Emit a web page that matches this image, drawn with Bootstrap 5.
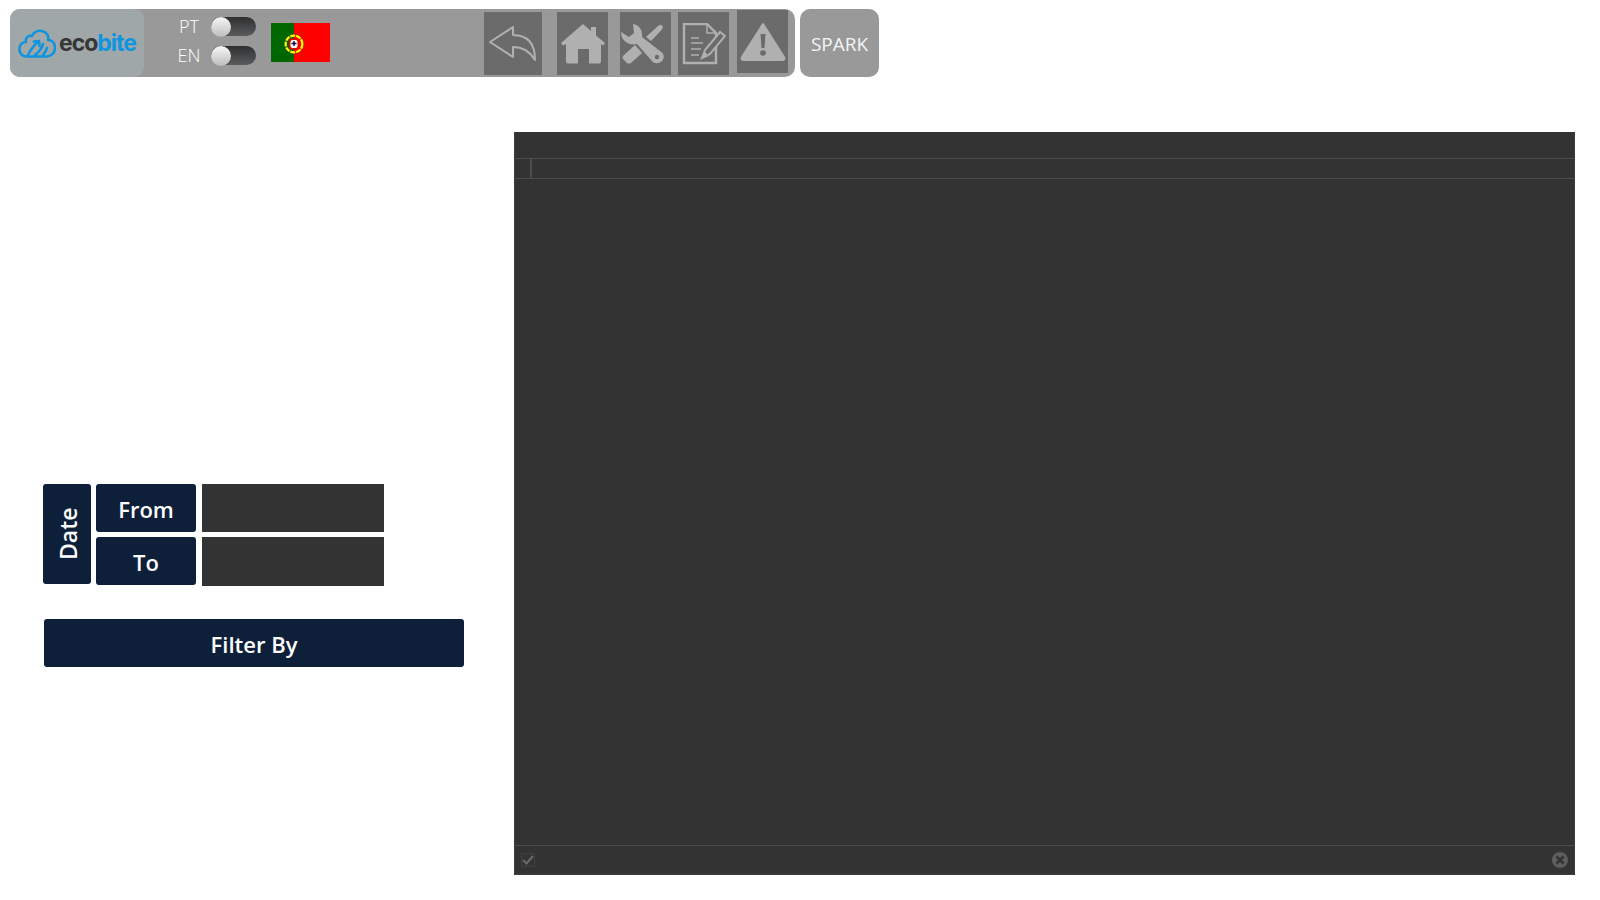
<!DOCTYPE html>
<html lang="en">
<head>
    <meta charset="UTF-8">
    <meta name="viewport" content="width=device-width, initial-scale=1.0">
    <title>Ecobite</title>
    <link href="https://cdn.jsdelivr.net/npm/bootstrap@5.3.0/dist/css/bootstrap.min.css" rel="stylesheet">
    <style>
        body { font-family: "Open Sans", "Noto Sans", sans-serif; background: #fff; overflow: hidden; }
        .top-area { padding: 9px 0 0 10px; height: 132px; }
        .tool-bar { width: 785px; height: 68px; background: #999; border-radius: 10px; }
        .tool-bar > * { flex-shrink: 0; }
        .logo-box { width: 134px; height: 68px; background: #9fa7a9; border-radius: 10px; padding: 1px 0 0 8px; }
        .logo-word { font-family: Inter, "Liberation Sans", sans-serif; font-weight: 700; font-size: 23px; letter-spacing: -1px; color: #363636; margin-left: 3px; }
        .logo-word span { color: #0f94e0; }
        .lang-box { width: 81px; margin-left: 31px; padding-top: 3px; }
        .lang-row { height: 29px; }
        .lang-name { width: 28px; font-size: 18px; font-weight: 300; color: #fff; text-align: center; }
        .lang-toggle { width: 45px; height: 19px; border-radius: 10px; background: linear-gradient(#2e2f31, #5a5b5d); margin-left: 8px; }
        .lang-knob { width: 20px; height: 20px; border-radius: 50%; background: linear-gradient(#f7f7f7, #bdbdbd); }
        .flag-box { margin-left: 15px; margin-top: 14px; }
        .tool-btn { height: 63px; background: #6b6b6b; margin-top: 3px; }
        .back-btn { width: 58px; margin-left: 154px; }
        .home-btn { width: 51px; margin-left: 15px; }
        .wrench-btn { width: 51px; margin-left: 12px; }
        .edit-btn { width: 51px; margin-left: 7px; }
        .warn-btn { width: 51px; margin-left: 8px; margin-top: 1px; }
        .spark-btn { width: 79px; height: 68px; background: #999; border-radius: 10px; color: #f4f4f4; font-size: 19px; margin-left: 5px; padding-top: 2px; }
        .left-pane { width: 514px; padding: 352px 0 0 43px; }
        .navy-cell { background: #0e1f3a; color: #fff; font-weight: 600; font-size: 22px; border-radius: 3px; }
        .date-cell { width: 48px; height: 100px; writing-mode: vertical-rl; transform: rotate(180deg); font-size: 23px; padding-right: 2px; }
        .range-cell { width: 100px; height: 48px; padding-top: 2px; }
        .date-grid { margin-left: 5px; gap: 5px; }
        .date-stack { gap: 5px; margin-left: 6px; }
        .date-field { width: 182px; height: 48px; background: #333; }
        .date-field-low { height: 49px; }
        .filter-btn { width: 420px; height: 48px; margin: 33px 0 0 1px; padding-top: 2px; }
        .editor-pane { width: 1061px; height: 743px; background: #333; border: 1px solid #3d3d3d; border-top: 0; }
        .editor-head { height: 27px; border-bottom: 1px solid #4c4c4c; }
        .editor-cols { height: 20px; border-bottom: 1px solid #4c4c4c; }
        .editor-gutter { width: 17px; border-right: 2px solid #4c4c4c; }
        .editor-foot { height: 29px; border-top: 1px solid #4c4c4c; padding: 0 6px; }
        .foot-check { width: 14px; height: 14px; border: 1px solid #3f3f3f; }
    </style>
</head>
<body>
    <div class="top-area d-flex align-items-start">
        <div class="tool-bar d-flex align-items-start">
            <div class="logo-box d-flex align-items-center">
                <svg width="38" height="29" viewBox="0 0 38 29" fill="none" stroke="#0f94e0" stroke-width="2.6" stroke-linecap="round" stroke-linejoin="round">
                    <path d="M9 27.500 C3 27.500 1 23 1.500 19 C2 15 5 13 8 13 C7 8 11 6 14 7 C16 3 20 1 24 2 C29 3 31 7 30 11 C35 11 37 15 37 19 C37 24 33 27.500 28 27.500 Z"/>
                    <path d="M10 26 C13 20 16 16 21 12 M21 12 l-5 .5 M21 12 l.5 5 M17 26 C21 23 24 20 25 15 M25 26 C27 24 28 22 29 19"/>
                </svg>
                <div class="logo-word">eco<span>bite</span></div>
            </div>
            <div class="lang-box">
                <div class="lang-row d-flex align-items-center">
                    <div class="lang-name">PT</div>
                    <div class="lang-toggle d-flex align-items-center"><div class="lang-knob"></div></div>
                </div>
                <div class="lang-row d-flex align-items-center">
                    <div class="lang-name">EN</div>
                    <div class="lang-toggle d-flex align-items-center"><div class="lang-knob"></div></div>
                </div>
            </div>
            <div class="flag-box">
                <svg class="d-block" width="59" height="39" viewBox="0 0 59 39">
                    <rect width="23" height="39" fill="#006600"/>
                    <rect x="23" width="36" height="39" fill="#ff0000"/>
                    <circle cx="23" cy="21" r="8.500" fill="none" stroke="#ffff00" stroke-width="2.400" stroke-dasharray="5 1"/>
                    <circle cx="23" cy="21" r="9.800" fill="none" stroke="#333" stroke-width=".4"/>
                    <rect x="18" y="15.500" width="10" height="11" rx="2" fill="#e00"/>
                    <rect x="19.500" y="17" width="7" height="8" rx="2" fill="#fff"/>
                    <rect x="22.300" y="18" width="1.400" height="5" fill="#004"/>
                    <rect x="20.500" y="19.800" width="5" height="1.400" fill="#004"/>
                </svg>
            </div>
            <div class="tool-btn back-btn d-flex align-items-center justify-content-center">
                <svg width="48" height="35" viewBox="0 0 48 35" fill="none" stroke="#b0b0b0" stroke-width="2" stroke-linejoin="round">
                    <path d="M1 16 L24 1 V9 C40 9 46 19 46 34 C40 24 32 21 24 21 V31 Z"/>
                </svg>
            </div>
            <div class="tool-btn home-btn d-flex align-items-center justify-content-center">
                <svg width="44" height="40" viewBox="0 0 44 40" fill="#b0b0b0">
                    <path d="M22 0 L30 7 V3 H35 V11.500 L44 19 L42 21.500 L40 20 V37 Q40 39.500 38 39.500 H28 V25 H17 V39.500 H7 Q5 39.500 5 37 V20 L2 21.500 L0 19 Z"/>
                </svg>
            </div>
            <div class="tool-btn wrench-btn d-flex align-items-center justify-content-start">
                <svg width="45" height="41" viewBox="0 0 45 41" fill="#b0b0b0">
                    <path d="M1 9 L9 14 L14 10 L13 1 C19 2 23 7 22 14 L40 28 C44 30 45 35 42 38 C39 41 34 41 32 38 L17 21 C9 23 1 18 1 9 Z"/>
                    <circle cx="37" cy="34" r="2.200" fill="#6b6b6b"/>
                    <path d="M26 14 L38 3 L41 1.500 L43 4 L41.500 7 L31 18 Z"/>
                    <path d="M3 33 L15 22 L22 30 L11 40 Q9 41 7 40 L3 36 Q2 34 3 33 Z"/>
                </svg>
            </div>
            <div class="tool-btn edit-btn d-flex align-items-center justify-content-center">
                <svg width="44" height="42" viewBox="0 0 44 42" fill="none" stroke="#b0b0b0" stroke-width="2.400">
                    <path d="M34 24 V40 H2 V1 H25 L34 10 V13"/>
                    <path d="M25 1 V10 H34" stroke-width="1.500"/>
                    <path d="M9 15 H17 M9 20 H21 M9 26 H19 M9 32 H17" stroke-width="1.500"/>
                    <path d="M20 35 L23 27 L38 9 L43 13 L28 31 Z" fill="#6b6b6b" stroke-width="2"/>
                    <path d="M20 35 L23 30 L25 33 Z" fill="#b0b0b0" stroke-width="1.500"/>
                </svg>
            </div>
            <div class="tool-btn warn-btn d-flex align-items-center justify-content-center">
                <svg width="46" height="40" viewBox="0 0 46 40">
                    <path d="M23 2 L44 35 Q45.500 38 42 38 H4 Q.5 38 2 35 Z" fill="#b0b0b0" stroke="#b0b0b0" stroke-width="2" stroke-linejoin="round"/>
                    <path d="M20.500 12 H25.500 L24.500 26 H21.500 Z" fill="#6b6b6b"/>
                    <circle cx="23" cy="31" r="2.800" fill="#6b6b6b"/>
                </svg>
            </div>
        </div>
        <div class="spark-btn d-flex align-items-center justify-content-center">SPARK</div>
    </div>

    <div class="d-flex align-items-start">
        <div class="left-pane">
            <div class="d-flex">
                <div class="navy-cell date-cell d-flex align-items-center justify-content-center">Date</div>
                <div class="date-grid d-flex flex-column">
                    <div class="navy-cell range-cell d-flex align-items-center justify-content-center">From</div>
                    <div class="navy-cell range-cell d-flex align-items-center justify-content-center">To</div>
                </div>
                <div class="date-stack d-flex flex-column">
                    <div class="date-field"></div>
                    <div class="date-field date-field-low"></div>
                </div>
            </div>
            <div class="navy-cell filter-btn d-flex align-items-center justify-content-center">Filter By</div>
        </div>
        <div class="editor-pane d-flex flex-column">
            <div class="editor-head"></div>
            <div class="editor-cols d-flex"><div class="editor-gutter"></div></div>
            <div class="flex-grow-1"></div>
            <div class="editor-foot d-flex align-items-center justify-content-between">
                <div class="foot-check d-flex align-items-center justify-content-center">
                    <svg width="12" height="10" viewBox="0 0 12 10" fill="none" stroke="#6a6a6a" stroke-width="2"><path d="M1 5 L4.500 8.500 L11 1"/></svg>
                </div>
                <svg width="16" height="16" viewBox="0 0 16 16">
                    <circle cx="8" cy="8" r="8" fill="#5e5e5e"/>
                    <path d="M4.500 4.500 L11.500 11.500 M11.500 4.500 L4.500 11.500" stroke="#333" stroke-width="2.600"/>
                </svg>
            </div>
        </div>
    </div>
    <script src="https://cdn.jsdelivr.net/npm/bootstrap@5.3.0/dist/js/bootstrap.bundle.min.js"></script>
</body>
</html>
